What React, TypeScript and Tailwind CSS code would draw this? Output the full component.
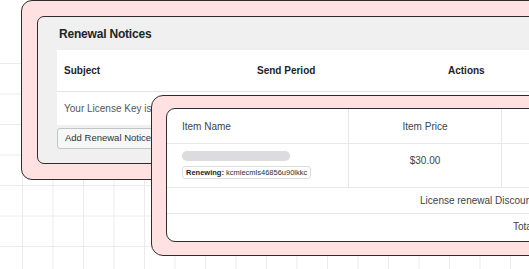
import React from 'react';

const ink = 'border-[#2d2d2d]';

const RenewalNoticesCard: React.FC = () => (
  <div className={`absolute left-[21px] top-0 h-[180px] w-[620px] rounded-[11px] border ${ink} bg-[#ffe1e1] p-[15px]`}>
    <div className={`flex h-full flex-col rounded-[7px] border ${ink} bg-[#f0f0f1]`}>
      <div className="flex h-[33px] items-center pl-[21px] text-[12px] font-bold tracking-[-0.2px] text-[#1d2327]">
        Renewal Notices
      </div>
      <div className="ml-[19px] w-[580px]">
        {/* header */}
        <div className="grid h-[42px] grid-cols-[193px_191px_1fr] items-center border-b border-[#e2e4e7] bg-white text-[10px] font-bold text-[#1d2327]">
          <div className="pl-[7px]">Subject</div>
          <div className="pl-[7px]">Send Period</div>
          <div className="pl-[7px]">Actions</div>
        </div>
        <div className="flex h-[33px] items-center bg-white pl-[7px] text-[10px] text-[#50575e]">
          Your License Key is about to expire
        </div>
        <button className="mt-[3px] flex h-[21px] items-center rounded-[3px] border border-[#c3c4c7] bg-[#f6f7f7] px-[7px] text-[9.5px] text-[#2c3338]">
          Add Renewal Notice
        </button>
      </div>
    </div>
  </div>
);

const OrderCard: React.FC = () => (
  <div className={`absolute left-[151px] top-[95px] h-[161px] w-[500px] rounded-[12px] border ${ink} bg-[#ffe1e1] pb-[13px] pl-[14px] pt-[12px]`}>
    <div className={`flex h-full flex-col overflow-hidden rounded-[9px] border ${ink} bg-white text-[10px] text-[#3c434a]`}>
      <div className="grid h-[35px] shrink-0 grid-cols-[182px_153px_1fr] border-b border-[#e8e8e8]">
        <div className="flex items-center border-r border-[#e8e8e8] pl-[15px]">Item Name</div>
        <div className="flex items-center justify-center border-r border-[#e8e8e8]">Item Price</div>
        <div />
      </div>
      <div className="grid h-[44px] shrink-0 grid-cols-[182px_153px_1fr] border-b border-[#e8e8e8]">
        <div className="flex flex-col items-start gap-[5px] border-r border-[#e8e8e8] pl-[15px] pt-[7px]">
          <div className="h-[10px] w-[108px] rounded-full bg-[#dcdcde]" />
          <div className="flex h-[13px] items-center rounded-[3px] border border-[#dcdcde] px-[3px] text-[7.5px] leading-none text-[#2c3338]">
            <span className="font-bold text-[#1d2327]">Renewing:</span>&nbsp;kcmlecmls46856u90lkkc
          </div>
        </div>
        <div className="border-r border-[#e8e8e8] pt-[11px] text-center leading-[12px]">$30.00</div>
        <div />
      </div>
      <div className="flex h-[25px] w-[375px] shrink-0 items-center justify-end whitespace-nowrap pr-[8px]">
        License renewal Discount
      </div>
      <div className="h-px w-full shrink-0 bg-[#e8e8e8]" />
      <div className="flex w-[375px] flex-1 items-center justify-end pb-[2px] pr-[8px]">Total</div>
    </div>
  </div>
);

export default function App() {
  return (
    <div className="relative h-[269px] w-[529px] overflow-hidden bg-white font-['Liberation_Sans',Arial,sans-serif]">
      {/* grid backdrop */}
      <div className="absolute inset-0 bg-[linear-gradient(to_right,#ebebeb_1px,transparent_1px),linear-gradient(to_bottom,#ebebeb_1px,transparent_1px)] bg-[size:30.5px_30.5px] bg-[position:22px_2px] [mask-image:linear-gradient(to_bottom,transparent_40px,black_58px)]" />
      <RenewalNoticesCard />
      <OrderCard />
    </div>
  );
}
